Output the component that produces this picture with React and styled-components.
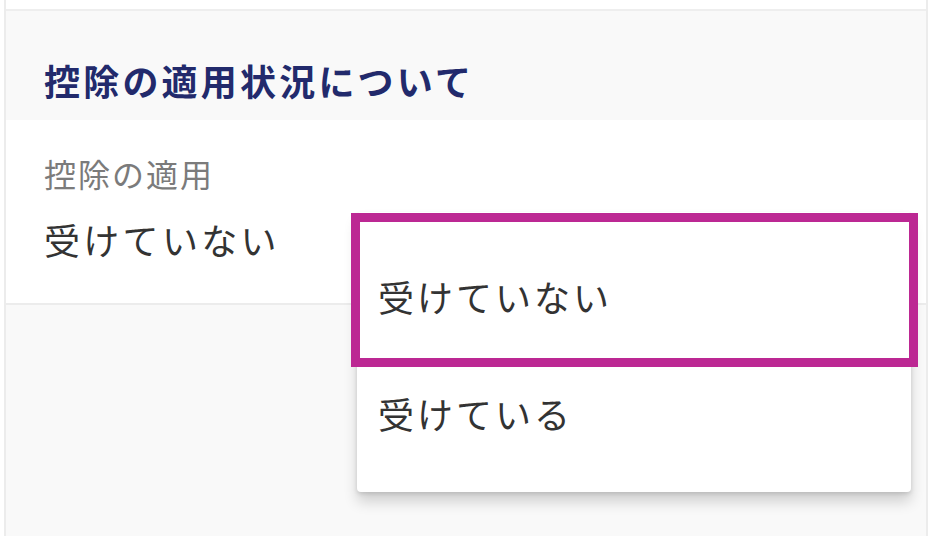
import React from "react";
import styled, { createGlobalStyle } from "styled-components";

const GlobalStyle = createGlobalStyle`
  html, body {
    margin: 0;
    padding: 0;
    background: #ffffff;
  }
  body {
    font-family: "Noto Sans CJK JP", "Noto Sans", sans-serif;
  }
`;

const Page = styled.div`
  position: relative;
  width: 930px;
  height: 536px;
  padding: 0 2px 0 4px;
  box-sizing: border-box;
  overflow: hidden;
`;

const Panel = styled.div`
  height: 100%;
  border-left: 2px solid #ececec;
  border-right: 2px solid #ececec;
  background: #f9f9f9;
  display: flex;
  flex-direction: column;
`;

const TopStrip = styled.div`
  height: 9px;
  background: #ffffff;
  border-bottom: 2px solid #eeeeee;
`;

const SectionHeader = styled.div`
  height: 109px;
  padding: 0 0 20px 38px;
  display: flex;
  align-items: flex-end;
  box-sizing: border-box;
`;

const SectionTitle = styled.h2`
  margin: 0;
  font-size: 36px;
  line-height: 40px;
  font-weight: 700;
  letter-spacing: 3.2px;
  color: #222a6c;
`;

const Field = styled.div`
  background: #ffffff;
  border-bottom: 2px solid #ececec;
  padding: 36px 0 0 38px;
  height: 185px;
  box-sizing: border-box;
  display: flex;
  flex-direction: column;
  gap: 30px;
`;

const FieldLabel = styled.div`
  font-size: 32px;
  line-height: 34px;
  letter-spacing: 2px;
  color: #7b7b7b;
`;

const FieldValue = styled.div`
  font-size: 36px;
  line-height: 38px;
  letter-spacing: 3.3px;
  color: #333333;
`;

const Menu = styled.div`
  position: absolute;
  left: 357px;
  top: 212px;
  width: 554px;
  height: 280px;
  background: #ffffff;
  border-radius: 4px;
  box-shadow: 0 10px 14px rgba(0, 0, 0, 0.16), 0 2px 4px rgba(0, 0, 0, 0.12);
  padding: 25px 0 20px;
  box-sizing: border-box;
  display: flex;
  flex-direction: column;
`;

const MenuItem = styled.div`
  height: 117px;
  display: flex;
  align-items: center;
  padding-left: 21px;
  font-size: 36px;
  letter-spacing: 3px;
  color: #333333;
`;

const Highlight = styled.div`
  position: absolute;
  left: -6px;
  right: -7px;
  top: 1px;
  height: 154px;
  border: 9px solid #bc2893;
  box-sizing: border-box;
  pointer-events: none;
`;

const options = ["受けていない", "受けている"];

export default function App() {
  return (
    <>
      <GlobalStyle />
      <Page>
        <Panel>
          <TopStrip />
          <SectionHeader>
            <SectionTitle>控除の適用状況について</SectionTitle>
          </SectionHeader>
          <Field>
            <FieldLabel>控除の適用</FieldLabel>
            <FieldValue>受けていない</FieldValue>
          </Field>
        </Panel>
        <Menu>
          {options.map((o) => (
            <MenuItem key={o}>{o}</MenuItem>
          ))}
          <Highlight />
        </Menu>
      </Page>
    </>
  );
}
